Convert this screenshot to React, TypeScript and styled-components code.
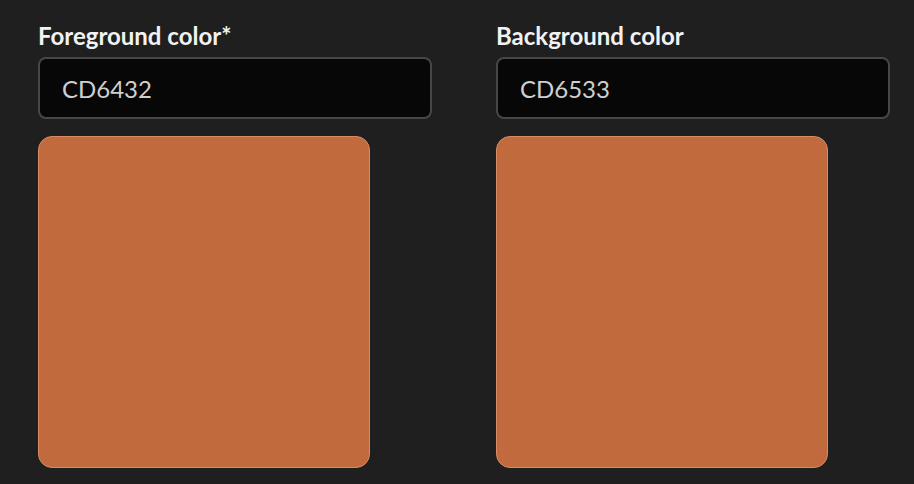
import React, { useState } from 'react';
import styled, { createGlobalStyle } from 'styled-components';

const GlobalStyle = createGlobalStyle`
  html, body {
    margin: 0;
    padding: 0;
    background: #1f1f1f;
  }
  body {
    font-family: Lato, "Noto Sans", sans-serif;
  }
`;

const Page = styled.div`
  display: flex;
  gap: 64px;
  padding: 20px 38px;
`;

const Field = styled.div`
  display: flex;
  flex-direction: column;
  width: 394px;
`;

const Label = styled.label`
  color: #f2f2f2;
  font-size: 24px;
  font-weight: 700;
  line-height: 32px;
  margin-bottom: 5px;
`;

const HexInput = styled.input`
  box-sizing: border-box;
  width: 394px;
  height: 62px;
  padding: 0 22px;
  background: #070707;
  border: 2px solid #474747;
  border-radius: 8px;
  color: #cfcfcf;
  font-family: inherit;
  font-size: 24px;
  outline: none;
`;

const Swatch = styled.div<{ $color: string }>`
  box-sizing: border-box;
  width: 332px;
  height: 332px;
  margin-top: 17px;
  background: ${(p) => p.$color};
  border: 1px solid #d98c63;
  border-radius: 14px;
`;

const ColorField = ({ label, initial }: { label: string; initial: string }) => {
  const [hex, setHex] = useState(initial);
  return (
    <Field>
      <Label>{label}</Label>
      <HexInput value={hex} onChange={(e) => setHex(e.target.value)} />
      <Swatch $color="#c06a3e" />
    </Field>
  );
};

export default function App() {
  return (
    <>
      <GlobalStyle />
      <Page>
        <ColorField label="Foreground color*" initial="CD6432" />
        <ColorField label="Background color" initial="CD6533" />
      </Page>
    </>
  );
}
